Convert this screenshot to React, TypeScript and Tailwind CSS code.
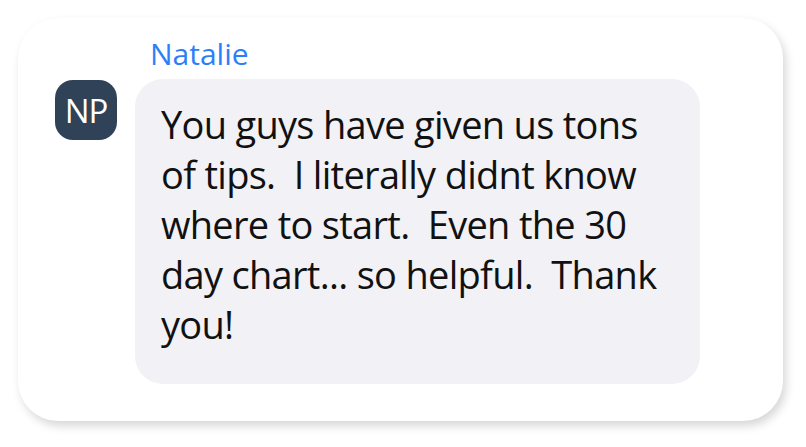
export default function App() {
  return (
    <div className="h-[447px] w-[806px] bg-white p-[18px] pb-[26px] pr-[23px]" style={{ fontFamily: '"Open Sans", "Noto Sans", sans-serif' }}>
      <div className="flex h-full w-full gap-[18px] rounded-[40px] bg-white pl-[37px] pt-[20px] shadow-[3px_5px_10px_rgba(0,0,0,0.16)]">
        <div className="mt-[42px] flex h-[60px] w-[62px] shrink-0 items-center justify-center rounded-[18px] bg-[#2f4257] text-[33px] leading-none tracking-[-1px] text-white">
          NP
        </div>
        <div className="flex flex-col">
          <div className="pl-[15px] text-[30px] leading-[31px] text-[#2d7ff9]">Natalie</div>
          <div className="mt-[10px] w-[565px] rounded-[28px] bg-[#f1f1f6] pb-[35px] pl-[26px] pr-[20px] pt-[20px] text-[38px] leading-[50px] tracking-[-0.7px] text-[#111111]">
            You guys have given us tons of tips.&nbsp; I literally didnt know where to start.&nbsp; Even the 30 day chart... so helpful.&nbsp; Thank you!
          </div>
        </div>
      </div>
    </div>
  );
}
